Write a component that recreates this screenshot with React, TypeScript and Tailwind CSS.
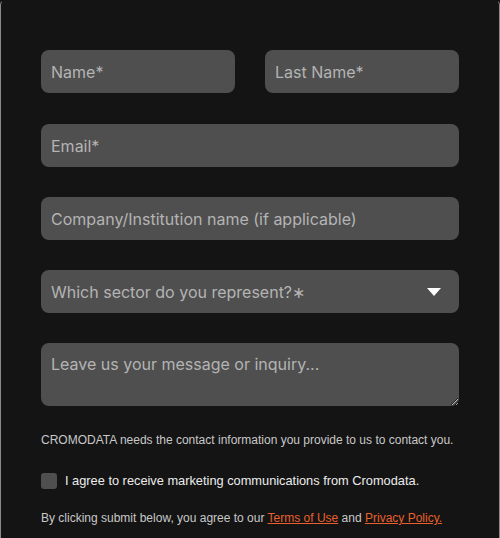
import React from "react";

export default function App() {
  const field =
    "w-full h-[43px] rounded-[8px] bg-[#4f4f4f] px-[10px] text-[16px] text-[#b4b4b4] placeholder:text-[#b4b4b4] outline-none";
  return (
    <div className="w-[500px] h-[538px] bg-[#141414] overflow-hidden">
      <div className="h-full border-l border-r border-t border-l-[#8a8a8a] border-r-[#8a8a8a] border-t-[#141414] rounded-t-[5px] px-[40px] pt-[49px] [font-family:Inter,'Noto_Sans',sans-serif]">
        <div className="grid grid-cols-2 gap-x-[30px]">
          <input className={field} placeholder="Name*" />
          <input className={field} placeholder="Last Name*" />
        </div>
        <input className={field + " mt-[31px] block"} placeholder="Email*" />
        <input className={field + " mt-[30px] block"} placeholder="Company/Institution name (if applicable)" />
        <div className="relative mt-[30px] h-[43px] rounded-[8px] bg-[#4f4f4f] flex items-center px-[10px] text-[16px] text-[#b4b4b4]">
          <span>Which sector do you represent?∗</span>
          <svg className="absolute left-[386px] top-[18px]" width="14" height="8" viewBox="0 0 14 8">
            <polygon points="0,0 14,0 7,8" fill="#ffffff" />
          </svg>
        </div>
        <textarea
          className="mt-[30px] block w-full h-[63px] rounded-[8px] bg-[#4f4f4f] px-[10px] pt-[9px] text-[16px] text-[#b4b4b4] placeholder:text-[#b4b4b4] outline-none resize-y"
          placeholder="Leave us your message or inquiry..."
        />
        <div className="[font-family:'Liberation_Sans',Arial,sans-serif]">
          <p className="mt-[27px] text-[12px] leading-[14px] text-[#c8c8c8]">
            CROMODATA needs the contact information you provide to us to contact you.
          </p>
          <div className="mt-[24px] flex items-center gap-[8px]">
            <span className="block w-[16px] h-[16px] rounded-[3px] bg-[#4f4f4f]" />
            <span className="text-[12.8px] text-[#ececec]">
              I agree to receive marketing communications from Cromodata.
            </span>
          </div>
          <p className="mt-[21px] text-[12px] leading-[14px] text-[#c8c8c8]">
            By clicking submit below, you agree to our{" "}
            <a className="text-[#e8602c] underline">Terms of Use</a> and{" "}
            <a className="text-[#e8602c] underline">Privacy Policy.</a>
          </p>
        </div>
      </div>
    </div>
  );
}
